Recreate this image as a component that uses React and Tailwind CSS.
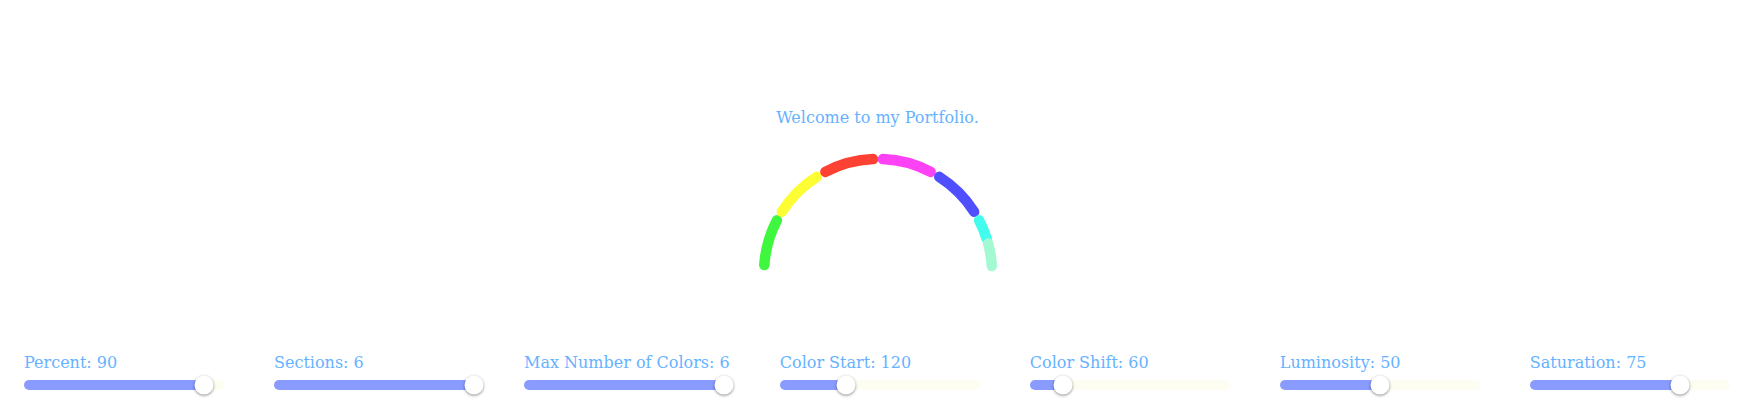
import React, { useState } from 'react';

const CX = 125;
const CY = 122;
const R = 114;

const point = (deg) => {
  const a = (deg * Math.PI) / 180;
  return [CX - R * Math.cos(a), CY - R * Math.sin(a)];
};

const arcPath = (from, to) => {
  const [x1, y1] = point(from);
  const [x2, y2] = point(to);
  return `M ${x1.toFixed(2)} ${y1.toFixed(2)} A ${R} ${R} 0 0 1 ${x2.toFixed(2)} ${y2.toFixed(2)}`;
};

const SEGMENTS = [
  { from: 4, to: 27.5, color: '#40f73f' },
  { from: 32.5, to: 57.5, color: '#fdfd33' },
  { from: 62.5, to: 87.5, color: '#fd4233' },
  { from: 92.5, to: 117.5, color: '#fd42f5' },
  { from: 122.5, to: 147.5, color: '#4f4ffd' },
  { from: 152.5, to: 162.5, color: '#42fdee' },
  { from: 165, to: 176.5, color: '#a2f9d2' },
];

const Slider = ({ label, value, min, max }) => {
  const pct = ((value - min) / (max - min)) * 100;
  return (
    <div className="flex flex-col shrink-0">
      <span className="text-[16px] leading-[20px] text-[#66b2ff] whitespace-nowrap">
        {label}: {value}
      </span>
      <div className="relative mt-[7px] w-[200px] h-[10px] rounded-full bg-[#fdfdf2]">
        <div className="h-full rounded-full bg-[#899bff]" style={{ width: `${pct}%` }} />
        <div
          className="absolute top-1/2 w-[19px] h-[19px] -translate-x-1/2 -translate-y-1/2 rounded-full bg-white shadow-[0_1px_3px_rgba(0,0,0,0.45)]"
          style={{ left: `${pct}%` }}
        />
      </div>
    </div>
  );
};

const App = () => {
  const [settings] = useState([
    { label: 'Percent', value: 90, min: 0, max: 100 },
    { label: 'Sections', value: 6, min: 1, max: 6 },
    { label: 'Max Number of Colors', value: 6, min: 1, max: 6 },
    { label: 'Color Start', value: 120, min: 0, max: 360 },
    { label: 'Color Shift', value: 60, min: 0, max: 360 },
    { label: 'Luminosity', value: 50, min: 0, max: 100 },
    { label: 'Saturation', value: 75, min: 0, max: 100 },
  ]);

  return (
    <div className="w-[1758px] h-[411px] bg-white font-['DejaVu_Serif',serif] overflow-hidden">
      <div className="flex flex-col items-center pt-[108px] pr-[3px]">
        <p className="text-[16px] leading-[20px] text-[#66b2ff]">Welcome to my Portfolio.</p>
        <svg width="250" height="130" viewBox="0 0 250 130" className="mt-[23px]">
          {SEGMENTS.map((s) => (
            <path
              key={s.color}
              d={arcPath(s.from, s.to)}
              fill="none"
              stroke={s.color}
              strokeWidth="10.5"
              strokeLinecap="round"
            />
          ))}
        </svg>
      </div>
      <div className="flex gap-[50px] pl-[24px] mt-[72px]">
        {settings.map((s) => (
          <Slider key={s.label} {...s} />
        ))}
      </div>
    </div>
  );
};

export default App;
